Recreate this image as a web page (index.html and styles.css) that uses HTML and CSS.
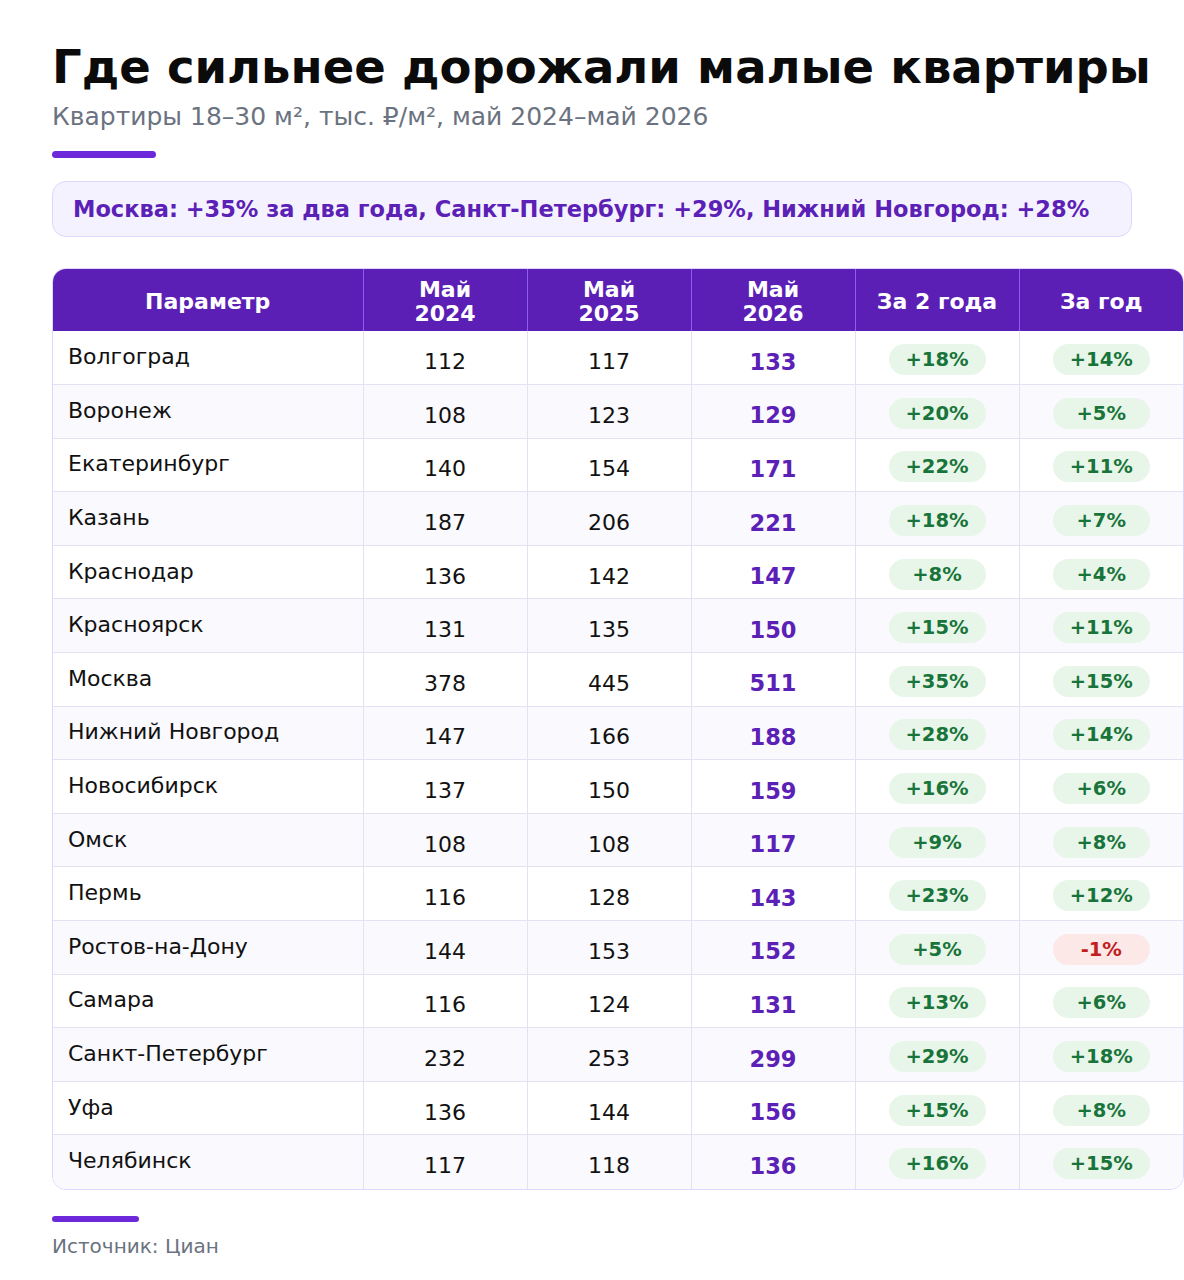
FILE: index.html
```html
<!DOCTYPE html>
<html lang="ru">
<head>
<meta charset="utf-8">
<title>Где сильнее дорожали малые квартиры</title>
<link rel="stylesheet" href="styles.css">
</head>
<body>
<div class="page">
  <h1 class="title">Где сильнее дорожали малые квартиры</h1>
  <div class="subtitle">Квартиры 18–30 м², тыс. ₽/м², май 2024–май 2026</div>
  <div class="accent"></div>
  <div class="highlight">Москва: +35% за два года, Санкт-Петербург: +29%, Нижний Новгород: +28%</div>
  <div class="table-wrap">
    <table class="data">
      <thead>
        <tr>
          <th class="c-name">Параметр</th>
          <th>Май<br>2024</th>
          <th>Май<br>2025</th>
          <th>Май<br>2026</th>
          <th>За 2 года</th>
          <th>За год</th>
        </tr>
      </thead>
      <tbody>
        <tr><td class="c-name">Волгоград</td><td>112</td><td>117</td><td class="hl">133</td><td><span class="pill up">+18%</span></td><td><span class="pill up">+14%</span></td></tr>
        <tr><td class="c-name">Воронеж</td><td>108</td><td>123</td><td class="hl">129</td><td><span class="pill up">+20%</span></td><td><span class="pill up">+5%</span></td></tr>
        <tr><td class="c-name">Екатеринбург</td><td>140</td><td>154</td><td class="hl">171</td><td><span class="pill up">+22%</span></td><td><span class="pill up">+11%</span></td></tr>
        <tr><td class="c-name">Казань</td><td>187</td><td>206</td><td class="hl">221</td><td><span class="pill up">+18%</span></td><td><span class="pill up">+7%</span></td></tr>
        <tr><td class="c-name">Краснодар</td><td>136</td><td>142</td><td class="hl">147</td><td><span class="pill up">+8%</span></td><td><span class="pill up">+4%</span></td></tr>
        <tr><td class="c-name">Красноярск</td><td>131</td><td>135</td><td class="hl">150</td><td><span class="pill up">+15%</span></td><td><span class="pill up">+11%</span></td></tr>
        <tr><td class="c-name">Москва</td><td>378</td><td>445</td><td class="hl">511</td><td><span class="pill up">+35%</span></td><td><span class="pill up">+15%</span></td></tr>
        <tr><td class="c-name">Нижний Новгород</td><td>147</td><td>166</td><td class="hl">188</td><td><span class="pill up">+28%</span></td><td><span class="pill up">+14%</span></td></tr>
        <tr><td class="c-name">Новосибирск</td><td>137</td><td>150</td><td class="hl">159</td><td><span class="pill up">+16%</span></td><td><span class="pill up">+6%</span></td></tr>
        <tr><td class="c-name">Омск</td><td>108</td><td>108</td><td class="hl">117</td><td><span class="pill up">+9%</span></td><td><span class="pill up">+8%</span></td></tr>
        <tr><td class="c-name">Пермь</td><td>116</td><td>128</td><td class="hl">143</td><td><span class="pill up">+23%</span></td><td><span class="pill up">+12%</span></td></tr>
        <tr><td class="c-name">Ростов-на-Дону</td><td>144</td><td>153</td><td class="hl">152</td><td><span class="pill up">+5%</span></td><td><span class="pill down">-1%</span></td></tr>
        <tr><td class="c-name">Самара</td><td>116</td><td>124</td><td class="hl">131</td><td><span class="pill up">+13%</span></td><td><span class="pill up">+6%</span></td></tr>
        <tr><td class="c-name">Санкт-Петербург</td><td>232</td><td>253</td><td class="hl">299</td><td><span class="pill up">+29%</span></td><td><span class="pill up">+18%</span></td></tr>
        <tr><td class="c-name">Уфа</td><td>136</td><td>144</td><td class="hl">156</td><td><span class="pill up">+15%</span></td><td><span class="pill up">+8%</span></td></tr>
        <tr><td class="c-name">Челябинск</td><td>117</td><td>118</td><td class="hl">136</td><td><span class="pill up">+16%</span></td><td><span class="pill up">+15%</span></td></tr>
      </tbody>
    </table>
  </div>
  <div class="accent accent-small"></div>
  <div class="source">Источник: Циан</div>
</div>
</body>
</html>
```

FILE: styles.css
```css
html, body {
  margin: 0;
  padding: 0;
  background: #ffffff;
}

body {
  font-family: "DejaVu Sans", "Noto Sans", sans-serif;
  color: #111111;
}

.page {
  width: 1080px;
  padding: 38px 52px 0 52px;
}

.title {
  margin: 0;
  font-size: 46.5px;
  font-weight: 700;
  line-height: 58px;
  color: #0b0b0b;
  white-space: nowrap;
}

.subtitle {
  margin-top: 5px;
  font-size: 25px;
  line-height: 32px;
  color: #6b7280;
  white-space: nowrap;
}

.accent {
  margin-top: 18px;
  width: 104px;
  height: 7px;
  border-radius: 4px;
  background: #6d28d9;
}

.highlight {
  margin-top: 23px;
  box-sizing: border-box;
  height: 56px;
  padding: 0 20px;
  display: flex;
  align-items: center;
  background: #f5f2ff;
  border: 1.5px solid #ddd6fe;
  border-radius: 14px;
  color: #5b21b6;
  font-size: 22.5px;
  font-weight: 700;
  white-space: nowrap;
}

.table-wrap {
  margin-top: 31px;
  width: 1132px;
  border: 1.5px solid #ddd6fe;
  border-radius: 14px;
  overflow: hidden;
  box-sizing: border-box;
}

.data {
  width: 100%;
  border-collapse: collapse;
  table-layout: fixed;
}

.data th {
  background: #5b1fb6;
  color: #ffffff;
  font-size: 22px;
  font-weight: 700;
  line-height: 24px;
  height: 62px;
  padding: 3px 8px 0 8px;
  text-align: center;
  border-left: 1px solid #8b5cf6;
  box-sizing: border-box;
}

.data th:first-child {
  border-left: none;
}

.data th.c-name {
  width: 310px;
}

.data td {
  height: 53.6px;
  box-sizing: border-box;
  padding: 8px 8px 0 8px;
  text-align: center;
  font-size: 22px;
  color: #111111;
  border-top: 1px solid #e5e1f3;
  border-left: 1px solid #e5e1f3;
}

.data tbody tr:first-child td {
  border-top: none;
}

.data td:first-child {
  border-left: none;
}

.data tbody tr:nth-child(even) td {
  background: #faf9fd;
}

.data td.c-name {
  text-align: left;
  padding: 0 15px 2px 15px;
}

.data td.hl {
  color: #5b21b6;
  font-weight: 700;
  font-size: 22.5px;
}

.pill {
  display: inline-block;
  width: 97px;
  height: 31px;
  line-height: 31px;
  border-radius: 16px;
  font-size: 19.5px;
  font-weight: 700;
  vertical-align: middle;
  position: relative;
  top: -2px;
}

.pill.up {
  background: #e8f6e9;
  color: #18743a;
}

.pill.down {
  background: #fde8e8;
  color: #c21d1d;
}

.accent-small {
  margin-top: 26px;
  width: 87px;
  height: 6px;
}

.source {
  margin-top: 12px;
  font-size: 20px;
  line-height: 24px;
  color: #6b7280;
}
```
